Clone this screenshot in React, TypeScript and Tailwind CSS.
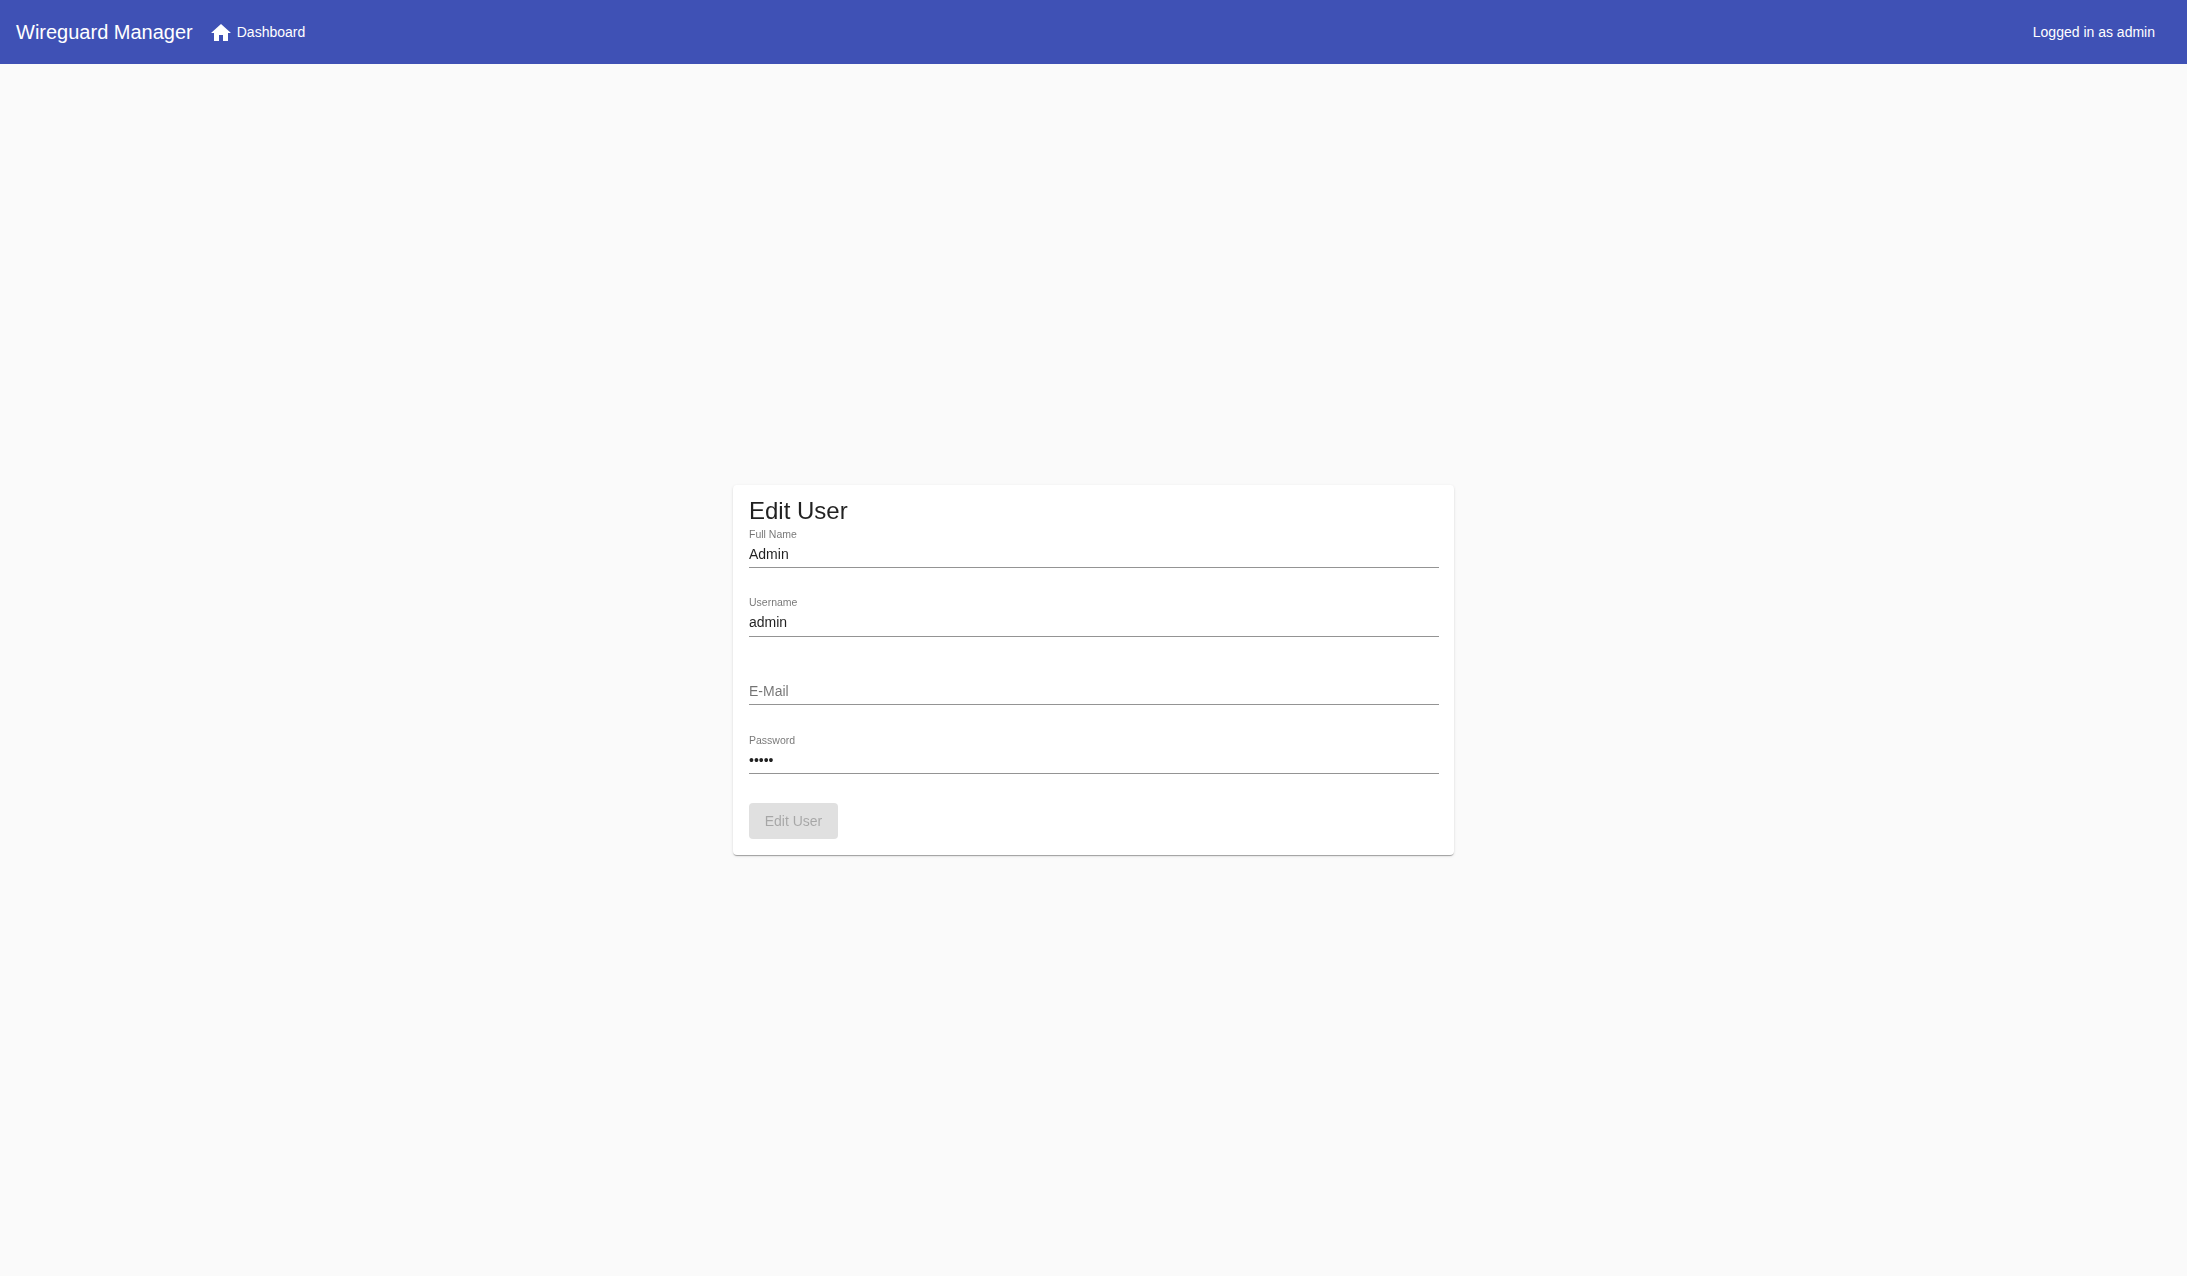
function Field({ label, value, type = 'text' }: { label: string; value: string; type?: string }) {
  return (
    <label className="relative block h-[40.75px] border-b border-[#949494] text-sm">
      {value ? (
        <span className="absolute left-0 top-[0.5px] text-[10.5px] leading-3 text-black/55">{label}</span>
      ) : null}
      <input
        readOnly
        type={type}
        value={value}
        placeholder={label}
        className="absolute bottom-[1.25px] left-0 h-[24px] w-full bg-transparent text-sm leading-6 text-black/87 outline-none placeholder:text-black/55"
      />
    </label>
  )
}

export default function App() {
  return (
    <div className="flex min-h-[1276px] flex-col bg-[#fafafa] font-['Liberation_Sans',Arial,sans-serif]">
      <header className="flex h-16 items-center justify-between bg-[#3f51b5] pl-4 pr-8 text-white">
        <div className="flex items-center">
          <h1 className="text-xl leading-8">Wireguard Manager</h1>
          <a className="ml-4 flex items-center gap-1 text-sm">
            <svg viewBox="0 0 24 24" className="mt-[2px] h-6 w-6 fill-white">
              <path d="M10 20v-6h4v6h5v-8h3L12 3 2 12h3v8z" />
            </svg>
            Dashboard
          </a>
        </div>
        <span className="text-sm">Logged in as admin</span>
      </header>

      <main className="flex flex-1 items-center justify-center">
        <div className="h-[370px] w-[721px] rounded bg-white pb-4 pl-4 pr-[15px] pt-[10px] shadow-[0_2px_1px_-1px_rgba(0,0,0,0.2),0_1px_1px_0_rgba(0,0,0,0.14),0_1px_3px_0_rgba(0,0,0,0.12)] [will-change:transform]">
          <h2 className="text-2xl leading-8 text-black/87">Edit User</h2>
          <form className="flex flex-col gap-7">
            <Field label="Full Name" value="Admin" />
            <Field label="Username" value="admin" />
            <Field label="E-Mail" value="" />
            <Field label="Password" value="admin" type="password" />
          </form>
          <button
            disabled
            className="mt-[29px] h-9 w-[89px] rounded bg-[#e0e0e0] text-sm text-black/26"
          >
            Edit User
          </button>
        </div>
      </main>
    </div>
  )
}
